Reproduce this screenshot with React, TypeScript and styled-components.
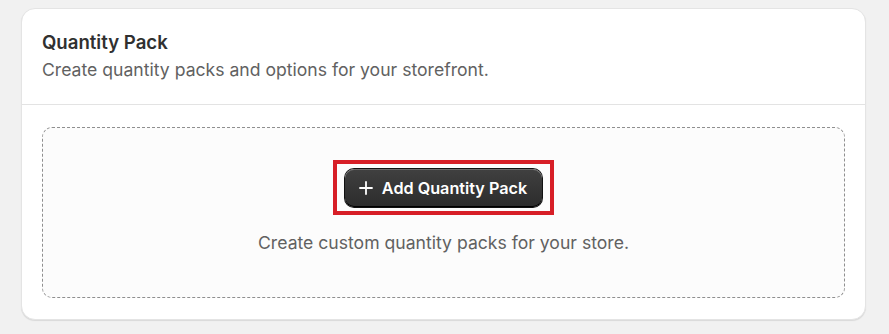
import React from "react";
import styled, { createGlobalStyle } from "styled-components";

const GlobalStyle = createGlobalStyle`
    html, body {
        margin: 0;
        padding: 0;
        background: #f1f1f1;
    }
    body {
        font-family: Inter, "Noto Sans", "Liberation Sans", sans-serif;
        -webkit-font-smoothing: antialiased;
    }
`;

const Page = styled.div`
    padding: 8px 23px 14px 21px;
`;

const Card = styled.section`
    background: #ffffff;
    border-radius: 14px;
    border: 1px solid #e4e4e4;
    box-shadow: 0 1px 1px rgba(0, 0, 0, 0.1);
    overflow: hidden;
`;

const Header = styled.div`
    padding: 20px 20px 20px 20px;
    border-bottom: 1px solid #e3e3e3;
`;

const Title = styled.h2`
    margin: 0;
    font-size: 18.6px;
    line-height: 26px;
    font-weight: 600;
    color: #303030;
`;

const Subtitle = styled.p`
    margin: 1px 0 0;
    font-size: 17.6px;
    line-height: 28px;
    color: #616161;
`;

const Body = styled.div`
    padding: 22px 20px 21px 20px;
`;

const EmptyState = styled.div`
    display: flex;
    flex-direction: column;
    align-items: center;
    gap: 16px;
    padding: 32px 0 42px;
    border: 1px dashed #8f8f8f;
    border-radius: 10px;
    background: #fcfcfc;
`;

/* red annotation frame around the call to action */
const Highlight = styled.div`
    padding: 5px 8px 4px;
    border: 4px solid #d71f27;
`;

const PrimaryButton = styled.button`
    display: flex;
    align-items: center;
    gap: 9px;
    height: 38px;
    padding: 0 15px 0 14px;
    border: none;
    border-radius: 9px;
    background: linear-gradient(180deg, #404040 0%, #2c2c2c 100%);
    box-shadow: inset 0 1px 0 rgba(255, 255, 255, 0.22),
        inset 0 -1px 0 #000000, 0 0 0 1px #111111;
    color: #ffffff;
    font-family: inherit;
    font-size: 16.2px;
    font-weight: 600;
    cursor: pointer;
`;

const Caption = styled.p`
    margin: 0;
    font-size: 17.6px;
    line-height: 24px;
    color: #616161;
`;

const PlusIcon = () => (
    <svg width="14" height="14" viewBox="0 0 14 14" fill="none">
        <path d="M7 1v12M1 7h12" stroke="#fff" strokeWidth="1.8" strokeLinecap="round" />
    </svg>
);

const App = () => {
    return (
        <Page>
            <GlobalStyle />
            <Card>
                <Header>
                    <Title>Quantity Pack</Title>
                    <Subtitle>Create quantity packs and options for your storefront.</Subtitle>
                </Header>
                <Body>
                    <EmptyState>
                        <Highlight>
                            <PrimaryButton>
                                <PlusIcon />
                                Add Quantity Pack
                            </PrimaryButton>
                        </Highlight>
                        <Caption>Create custom quantity packs for your store.</Caption>
                    </EmptyState>
                </Body>
            </Card>
        </Page>
    );
};

export default App;
